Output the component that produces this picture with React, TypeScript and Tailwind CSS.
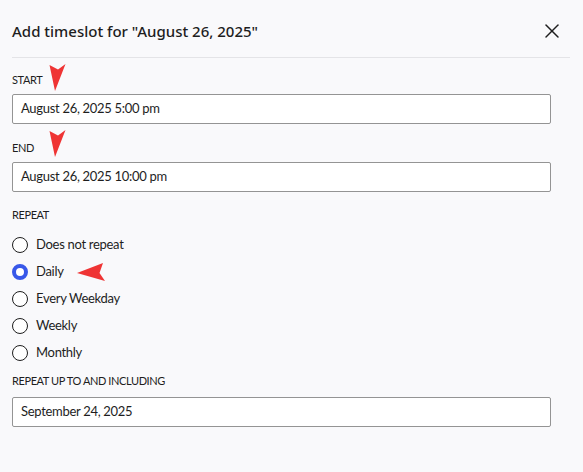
import { X } from 'lucide-react';

const options = ['Does not repeat', 'Daily', 'Every Weekday', 'Weekly', 'Monthly'];

function Label({ children }: { children: string }) {
  return (
    <div className="h-4 font-['Lato',sans-serif] text-[11px] leading-4 tracking-[-0.4px] uppercase text-[#1e1e1e]">
      {children}
    </div>
  );
}

function Field({ value }: { value: string }) {
  return (
    <div className="mt-[6px] flex h-[30px] w-[539px] items-center rounded-[2px] border border-[#949494] bg-white px-2 font-['Lato',sans-serif] text-[13px] tracking-[-0.3px] text-[#1e1e1e]">
      {value}
    </div>
  );
}

function DownArrow({ left, top }: { left: number; top: number }) {
  return (
    <svg className="absolute" style={{ left, top }} width="18" height="28" viewBox="0 0 18 28">
      <polygon points="0.5,1 9,5.5 16.5,0 6,27" fill="#ef3434" />
    </svg>
  );
}

export default function App() {
  return (
    <div className="relative h-[472px] w-[583px] overflow-hidden bg-[#f9f9fb] font-['Noto_Sans',sans-serif] text-[#1e1e1e]">
      <div className="ml-3 mr-[13px] flex h-[58px] items-center justify-between border-b border-[#e4e4e7] pt-[5px]">
        <h1 className="text-[15px] font-medium text-[#1e1e1e]">Add timeslot for "August 26, 2025"</h1>
        <button className="mr-[6px] flex h-6 w-6 items-center justify-center text-[#1e1e1e]">
          <X className="h-6 w-6" strokeWidth={1.5} />
        </button>
      </div>

      <div className="px-3 pt-[14px]">
        <Label>Start</Label>
        <Field value="August 26, 2025 5:00 pm" />

        <div className="mt-4">
          <Label>End</Label>
          <Field value="August 26, 2025 10:00 pm" />
        </div>

        <div className="mt-[15px]">
          <Label>Repeat</Label>
          <div className="mt-2 flex flex-col">
            {options.map((o) => (
              <label
                key={o}
                className="flex h-[27px] items-center gap-2 font-['Lato',sans-serif] text-[13px] tracking-[-0.3px]"
              >
                {o === 'Daily' ? (
                  <span className="h-4 w-4 rounded-full border-[4.5px] border-[#3858e9] bg-white" />
                ) : (
                  <span className="h-4 w-4 rounded-full border-[1.5px] border-[#1e1e1e] bg-white" />
                )}
                {o}
              </label>
            ))}
          </div>
        </div>

        <div className="mt-[7px]">
          <Label>Repeat up to and including</Label>
          <div className="mt-2">
            <Field value="September 24, 2025" />
          </div>
        </div>
      </div>

      <DownArrow left={49} top={64} />
      <DownArrow left={49} top={130} />
      <svg className="absolute" style={{ left: 76, top: 262 }} width="30" height="20" viewBox="0 0 30 20">
        <polygon points="1,11 27,1 23.5,11 29,19" fill="#ef3434" />
      </svg>
    </div>
  );
}
